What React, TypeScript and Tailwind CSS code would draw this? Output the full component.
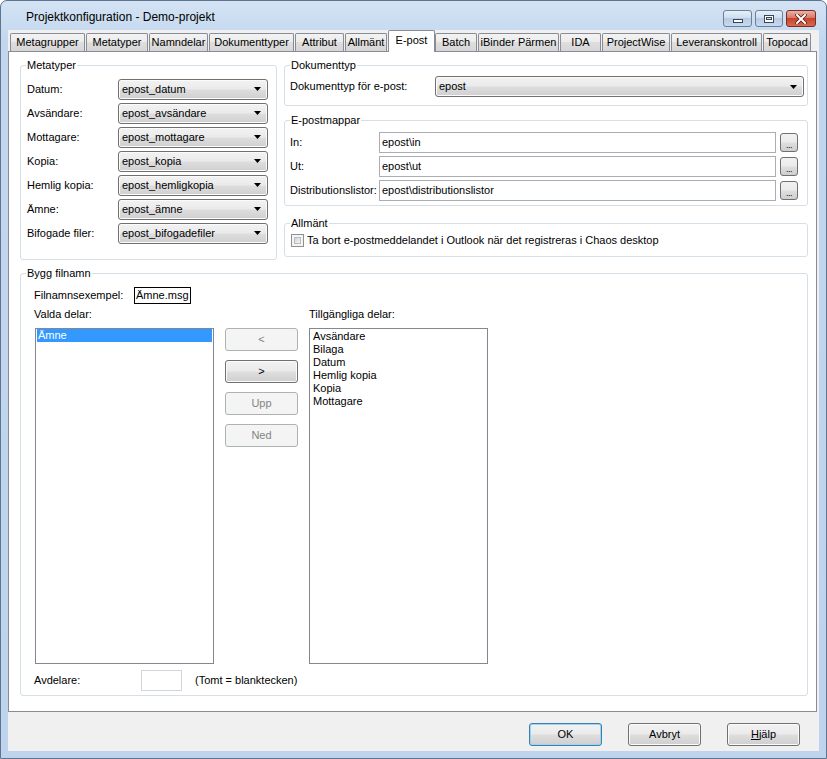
import React from 'react'

const face = "bg-[linear-gradient(#f2f2f2,#ebebeb_45%,#dddddd_55%,#cfcfcf)]"

const metatyper: [string, string][] = [
  ["Datum:", "epost_datum"],
  ["Avsändare:", "epost_avsändare"],
  ["Mottagare:", "epost_mottagare"],
  ["Kopia:", "epost_kopia"],
  ["Hemlig kopia:", "epost_hemligkopia"],
  ["Ämne:", "epost_ämne"],
  ["Bifogade filer:", "epost_bifogadefiler"],
]

const mappar: [string, string][] = [
  ["In:", "epost\\in"],
  ["Ut:", "epost\\ut"],
  ["Distributionslistor:", "epost\\distributionslistor"],
]

const tillgangliga = ["Avsändare", "Bilaga", "Datum", "Hemlig kopia", "Kopia", "Mottagare"]

// tab label + width (slot minus the 1px gap)
const tabs: [string, string][] = [
  ["Metagrupper", "w-[75px]"],
  ["Metatyper", "w-[62px]"],
  ["Namndelar", "w-[59px]"],
  ["Dokumenttyper", "w-[85px]"],
  ["Attribut", "w-[49px]"],
  ["Allmänt", "w-[42px]"],
  ["E-post", "w-[47px]"],
  ["Batch", "w-[42px]"],
  ["iBinder Pärmen", "w-[81px]"],
  ["IDA", "w-[41px]"],
  ["ProjectWise", "w-[68px]"],
  ["Leveranskontroll", "w-[91px]"],
  ["Topocad", "w-[48px]"],
]

const Combo = ({ value, className }: { value: string; className: string }) => (
  <div className={`${className} h-[21px] flex items-center pl-[3px] pr-[6px] border border-[#707070] rounded-[3px] ${face} shadow-[inset_0_0_0_1px_#fbfbfb]`}>
    <span className="flex-1 truncate">{value}</span>
    <svg width="7" height="4" viewBox="0 0 7 4">
      <path d="M0 0H7L3.5 4Z" fill="#000" />
    </svg>
  </div>
)

const Group = ({ title, className, children }: { title: string; className?: string; children: React.ReactNode }) => (
  <fieldset className={`border border-[#d5dfe5] rounded-[3px] min-w-0 ${className ?? ""}`}>
    <legend className="ml-[5px] px-[1px] leading-[13px]">{title}</legend>
    {children}
  </fieldset>
)

const Btn = ({ children, disabled, def }: { children: React.ReactNode; disabled?: boolean; def?: boolean }) => {
  if (disabled)
    return (
      <div className="w-[73px] h-[23px] flex items-center justify-center rounded-[3px] border border-[#adb2b5] bg-[#f4f4f4] text-[#838383]">
        {children}
      </div>
    )
  return (
    <div
      className={`w-[73px] h-[23px] flex items-center justify-center rounded-[3px] border ${face} ${
        def ? "border-[#3c7fb1] shadow-[inset_0_0_0_1px_#9fd3f2]" : "border-[#707070] shadow-[inset_0_0_0_1px_#fbfbfb]"
      }`}
    >
      {children}
    </div>
  )
}

const Dots = () => (
  <div className={`w-[18px] h-[19px] shrink-0 rounded-[3px] border border-[#707070] ${face} flex items-end justify-center pb-[3px] text-[9px] leading-[6px] tracking-[-0.5px]`}>
    ...
  </div>
)

const TitleButtons = () => (
  <div className="ml-auto mt-[9px] mr-[10px] flex gap-[3px]">
    <div className="w-[29px] h-[17px] rounded-[3px] border border-[#6d7f97] bg-[linear-gradient(#e7eff8,#cddcee_50%,#b7cbe4_50%,#c7d9ee)] flex items-end justify-center pb-[3px]">
      <div className="w-[10px] h-[4px] bg-white border border-[#39465a]" />
    </div>
    <div className="w-[28px] h-[17px] rounded-[3px] border border-[#6d7f97] bg-[linear-gradient(#e7eff8,#cddcee_50%,#b7cbe4_50%,#c7d9ee)] flex items-center justify-center">
      <div className="w-[10px] h-[8px] border border-[#39465a] bg-white flex items-center justify-center">
        <div className="w-[6px] h-[3px] border border-[#39465a] bg-[#d8e3ef]" />
      </div>
    </div>
    <div className="w-[30px] h-[17px] rounded-[3px] border border-[#7a2b22] bg-[linear-gradient(#eab0a5,#d9725f_50%,#c7432c_50%,#d86a4f)] flex items-center justify-center">
      <svg width="12" height="10" viewBox="0 0 12 10">
        <path d="M2 1L10 9M10 1L2 9" stroke="#5b1a12" strokeWidth="3.6" strokeLinecap="square" />
        <path d="M2 1L10 9M10 1L2 9" stroke="#ffffff" strokeWidth="2" strokeLinecap="square" />
      </svg>
    </div>
  </div>
)

const App = () => {
  return (
    <div className="w-[827px] h-[759px] flex flex-col border border-[#5e7490] rounded-t-[7px] bg-[linear-gradient(#d4e3f4,#c2d7ee_40px,#bed4ec)] font-['Liberation_Sans',Arial,sans-serif] text-[11px] text-black overflow-hidden">
      {/* title bar */}
      <div className="h-[29px] shrink-0 flex items-start">
        <div className="pl-[25px] pt-[9px] text-[12px] leading-[15px]">Projektkonfiguration - Demo-projekt</div>
        <TitleButtons />
      </div>

      {/* client */}
      <div className="flex-1 mx-[7px] mb-[7px] bg-[#f0f0f0] flex flex-col">
        {/* tabs */}
        <div className="h-[21px] shrink-0 flex items-end pl-[2px]">
          {tabs.map(([t, w]) =>
            t === "E-post" ? (
              <div key={t} className={`${w} h-[22px] -mb-[1px] relative z-10 bg-white border-t border-l border-r border-[#898c95] rounded-t-[2px] flex items-center justify-center pb-[2px] whitespace-nowrap`}>
                {t}
              </div>
            ) : (
              <div key={t} className={`${w} h-[18px] mr-[1px] border-t border-l border-r border-[#898c95] rounded-t-[2px] bg-[linear-gradient(#f3f3f3,#ebebeb_50%,#dedede_50%,#d6d6d6)] flex items-center justify-center whitespace-nowrap`}>
                {t}
              </div>
            )
          )}
        </div>

        {/* panel */}
        <div className="h-[661px] shrink-0 mr-[2px] border border-[#898c95] bg-white pl-[11px] pr-[8px] pt-[7px]">
          <div className="flex items-start gap-[7px]">
            <Group title="Metatyper" className="w-[257px] shrink-0">
              <div className="pt-[7px] pb-[16px] pl-[6px] flex flex-col gap-[4px]">
                {metatyper.map(([l, v]) => (
                  <div key={l} className="h-[20px] flex items-center">
                    <div className="w-[91px]">{l}</div>
                    <Combo value={v} className="w-[150px]" />
                  </div>
                ))}
              </div>
            </Group>

            <div className="flex-1 flex flex-col">
              <Group title="Dokumenttyp">
                <div className="pt-[4px] pb-[8px] pl-[5px] pr-[3px] flex items-center">
                  <div className="w-[145px]">Dokumenttyp för e-post:</div>
                  <Combo value="epost" className="flex-1" />
                </div>
              </Group>

              <Group title="E-postmappar" className="mt-[8px]">
                <div className="pt-[5px] pb-[4px] pl-[5px] pr-[9px] flex flex-col gap-[3px]">
                  {mappar.map(([l, v]) => (
                    <div key={l} className="h-[21px] flex items-center">
                      <div className="w-[89px] whitespace-nowrap">{l}</div>
                      <div className="flex-1 h-[21px] border border-[#abadb3] bg-white flex items-center pl-[2px]">{v}</div>
                      <div className="ml-[4px]">
                        <Dots />
                      </div>
                    </div>
                  ))}
                </div>
              </Group>

              <Group title="Allmänt" className="mt-[11px]">
                <div className="pt-[4px] pb-[9px] pl-[6px]">
                  <div className="h-[13px] flex items-center">
                    <div className="w-[13px] h-[13px] shrink-0 border border-[#8e8f8f] bg-[#f4f4f4] p-[2px]">
                      <div className="w-full h-full border border-[#b9bdc2] bg-[linear-gradient(135deg,#cfd3d8,#f4f4f4)]" />
                    </div>
                    <div className="ml-[3px] whitespace-nowrap">Ta bort e-postmeddelandet i Outlook när det registreras i Chaos desktop</div>
                  </div>
                </div>
              </Group>
            </div>
          </div>

          <Group title="Bygg filnamn" className="mt-[7px]">
            <div className="pt-[7px] pb-[4px] pl-[13px]">
              <div className="h-[17px] flex items-center">
                <div className="w-[100px]">Filnamnsexempel:</div>
                <div className="h-[17px] border border-black flex items-center px-[1px] whitespace-nowrap">Ämne.msg</div>
              </div>
              <div className="mt-[4px] flex leading-[13px]">
                <div className="w-[275px]">Valda delar:</div>
                <div>Tillgängliga delar:</div>
              </div>
              <div className="mt-[7px] flex items-start">
                <div className="ml-[1px] w-[179px] h-[336px] border border-[#828790] bg-white p-[1px] pt-0">
                  <div className="h-[13px] leading-[13px] bg-[#3399ff] text-white pl-[1px]">Ämne</div>
                </div>
                <div className="ml-[11px] w-[73px] flex flex-col gap-[9px]">
                  <Btn disabled>&lt;</Btn>
                  <Btn>&gt;</Btn>
                  <Btn disabled>Upp</Btn>
                  <Btn disabled>Ned</Btn>
                </div>
                <div className="ml-[11px] w-[179px] h-[336px] border border-[#828790] bg-white px-[3px] pt-[1px]">
                  {tillgangliga.map((t) => (
                    <div key={t} className="h-[13px] leading-[13px]">{t}</div>
                  ))}
                </div>
              </div>
              <div className="mt-[6px] h-[21px] flex items-center">
                <div className="w-[107px]">Avdelare:</div>
                <div className="w-[41px] h-[21px] border border-[#d3d5da] bg-white" />
                <div className="ml-[13px]">(Tomt = blanktecken)</div>
              </div>
            </div>
          </Group>
        </div>

        {/* dialog buttons */}
        <div className="flex justify-end gap-[26px] pt-[11px] pr-[19px]">
          <Btn def>OK</Btn>
          <Btn>Avbryt</Btn>
          <Btn>
            <span>
              <span className="underline">H</span>jälp
            </span>
          </Btn>
        </div>
      </div>
    </div>
  )
}

export default App
